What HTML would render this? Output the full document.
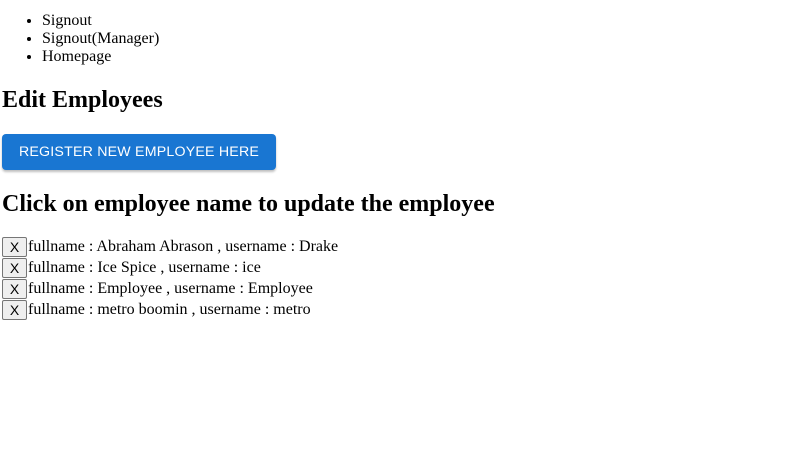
<!DOCTYPE html>
<html><head><style>
body{margin:0;padding:0 0 0 2px;font-family:"Liberation Serif",serif;font-size:16px;color:#000;background:#fff}
ul{margin:12px 0 0;padding-left:40px;line-height:18px}
h2{font-size:24px;margin:20px 0;line-height:28px}
h2.b{margin-bottom:18px}
.reg{display:block;box-sizing:border-box;white-space:nowrap;background:#1976d2;color:#fff;font-family:"Liberation Sans",sans-serif;font-size:14.2px;letter-spacing:.2px;height:36px;line-height:36px;border-radius:4px;box-shadow:0 2px 2px rgba(0,0,0,.25);width:274px;text-align:center}
.row{height:21px;line-height:20px;display:flex;align-items:center}
.x{display:inline-block;box-sizing:border-box;width:25px;height:20px;border:1px solid #767676;border-radius:2px;background:#efefef;font-family:"Liberation Sans",sans-serif;font-size:14px;text-align:center;line-height:18px;margin-right:1px}
</style></head><body>
<ul><li>Signout</li><li>Signout(Manager)</li><li>Homepage</li></ul>
<h2>Edit Employees</h2>
<div class="reg">REGISTER NEW EMPLOYEE HERE</div>
<h2 class="b">Click on employee name to update the employee</h2>
<div class="row"><span class="x">X</span>fullname : Abraham Abrason , username : Drake</div>
<div class="row"><span class="x">X</span>fullname : Ice Spice , username : ice</div>
<div class="row"><span class="x">X</span>fullname : Employee , username : Employee</div>
<div class="row"><span class="x">X</span>fullname : metro boomin , username : metro</div>
</body></html>
